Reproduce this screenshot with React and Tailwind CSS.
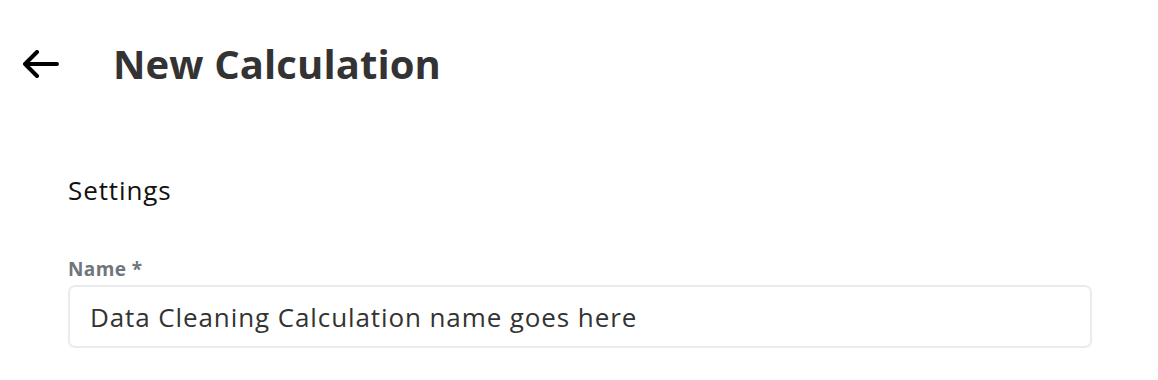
import React, { useState } from "react"

const BackArrow = () => (
  <svg width="36" height="28" viewBox="0 0 36 28" fill="none" className="block">
    <path
      d="M2 14H34M14 2L2 14L14 26"
      stroke="#000"
      strokeWidth="4"
      strokeLinecap="round"
      strokeLinejoin="round"
    />
  </svg>
)

const App = () => {
  const [name, setName] = useState("Data Cleaning Calculation name goes here")

  return (
    <div className="min-h-[380px] bg-white font-['Open_Sans',sans-serif]">
      <header className="flex items-center h-[130px] pb-[2px]">
        <button className="ml-[23px] mr-[54px] flex items-center">
          <BackArrow />
        </button>
        <h1 className="text-[40px] font-bold text-[#333333] tracking-[0.1px]">
          New Calculation
        </h1>
      </header>

      <main className="pl-[68px] pr-[66px]">
        <h2 className="text-[26px] text-[#111111] leading-none tracking-[0.9px] pt-[47px]">
          Settings
        </h2>

        <form className="mt-[57px]" onSubmit={(e) => e.preventDefault()}>
          <label className="block text-[19px] font-bold text-[#70767d] leading-none tracking-[0.4px] mb-[6px]">
            Name *
          </label>
          <input
            className="w-full h-[63px] px-[20px] text-[26px] text-[#333333] tracking-[0.9px] border-2 border-[#ebebeb] rounded-[7px] focus:outline-none"
            type="text"
            value={name}
            onChange={(e) => setName(e.target.value)}
          />
        </form>
      </main>
    </div>
  )
}

export default App
